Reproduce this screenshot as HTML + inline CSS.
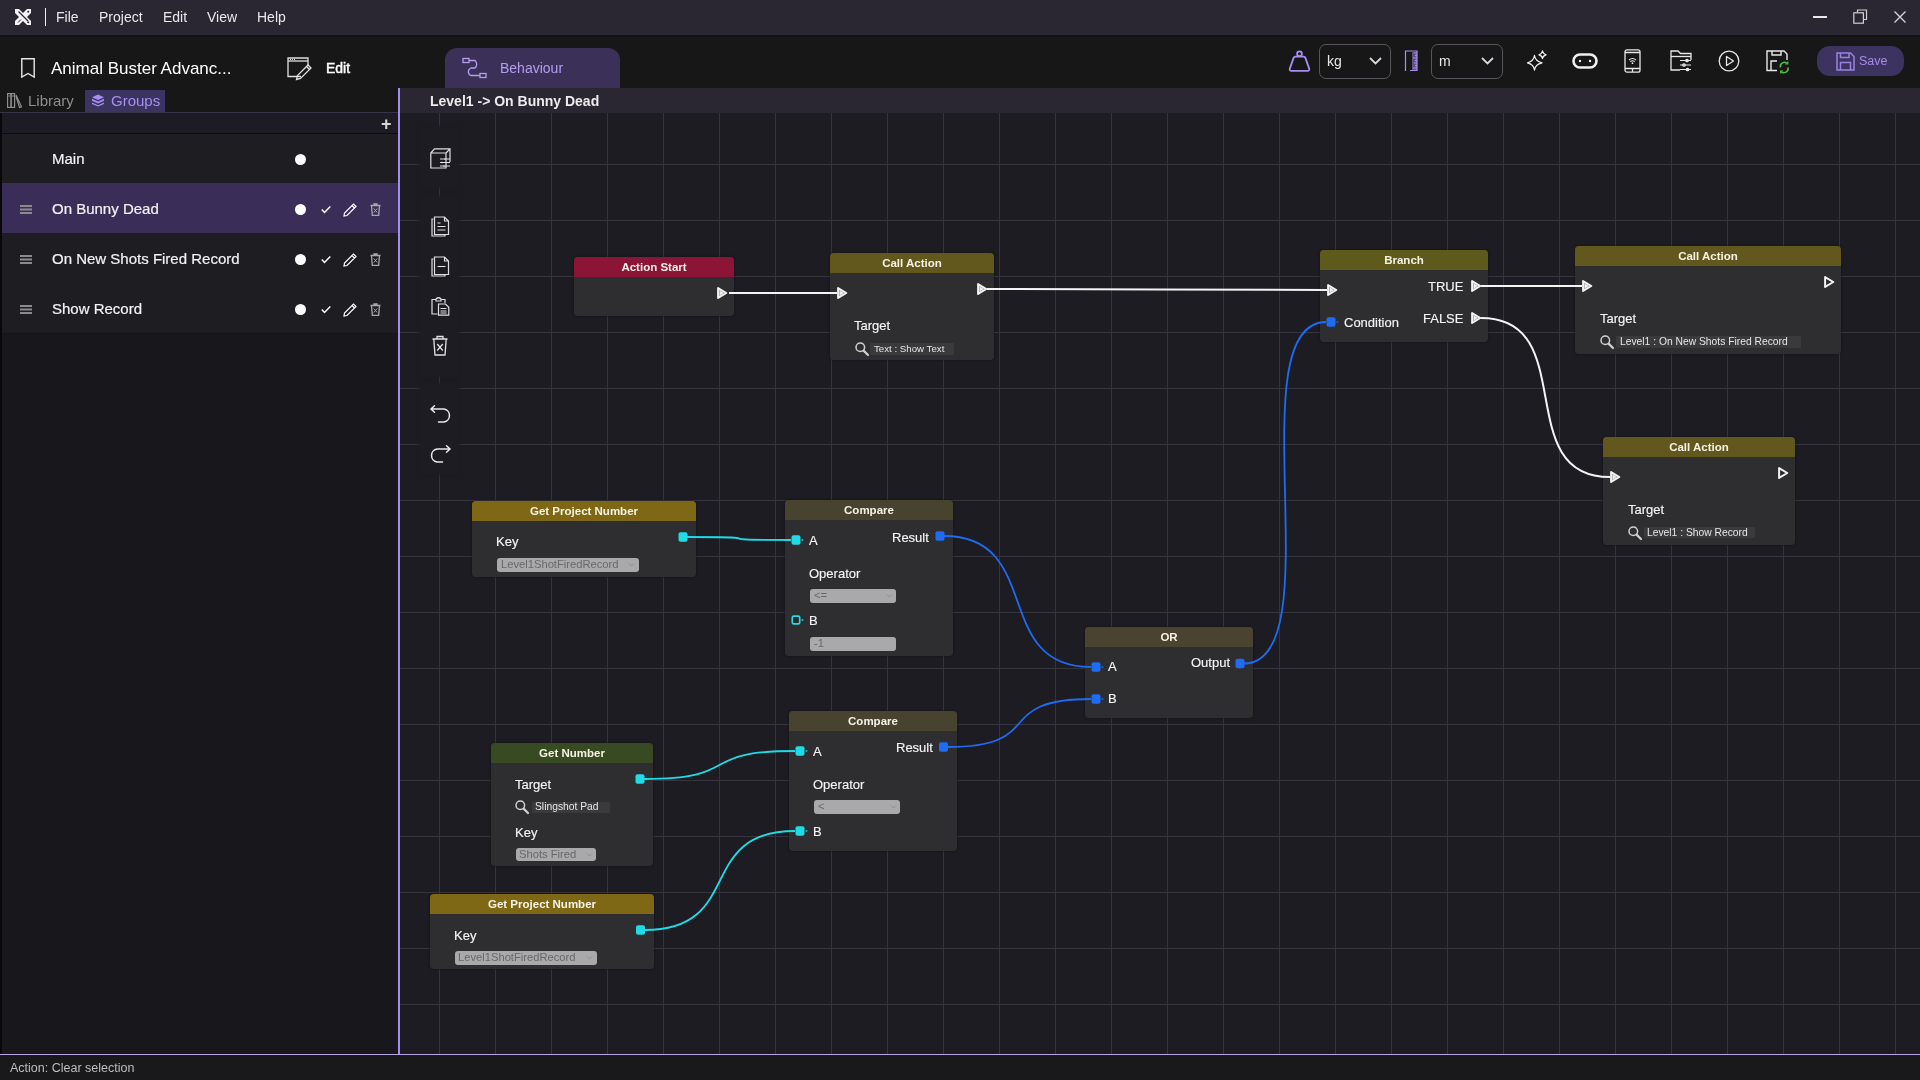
<!DOCTYPE html>
<html><head><meta charset="utf-8">
<style>
*{box-sizing:border-box;margin:0;padding:0}
html,body{width:1920px;height:1080px;overflow:hidden;background:#19181b;font-family:"Liberation Sans",sans-serif;color:#fff}
.a{position:absolute}
.t{position:absolute;line-height:1;white-space:nowrap;will-change:transform}
#titlebar{left:0;top:0;width:1920px;height:35px;background:#2a2733}
#tbborder{left:0;top:35px;width:1920px;height:2px;background:#131216}
#toolbar{left:0;top:37px;width:1920px;height:51px;background:#171717}
#sidebar{left:0;top:88px;width:398px;height:966px;background:#18171b}
#vline{left:398px;top:88px;width:2px;height:966px;background:#a48df2}
#canvas{left:400px;top:113px;width:1520px;height:941px;background-color:#1d1c23;
 background-image:linear-gradient(to right,transparent 39px,#36343c 39px,#36343c 40px,transparent 40px),
 linear-gradient(to bottom,transparent 51px,#36343c 51px,#36343c 52px,transparent 52px);
 background-size:56px 56px;}
#canvhead{left:400px;top:88px;width:1520px;height:25px;background:#2a2732}
#hline{left:0;top:1054px;width:1920px;height:1px;background:#b7a6e8}
#status{left:0;top:1055px;width:1920px;height:25px;background:#19191b}
.menu{font-size:14px;color:#e8e8ea}
svg{position:absolute;overflow:visible}
.nd{position:absolute;background:rgba(47,47,49,0.95);border-radius:4px;box-shadow:0 0 3px rgba(0,0,0,0.45)}
.nh{position:absolute;left:0;top:0;width:100%;height:20px;will-change:transform;border-radius:4px 4px 0 0;font-size:11.5px;font-weight:700;text-align:center;line-height:20px;color:#f6f1e4;white-space:nowrap}
.lb{position:absolute;line-height:1;white-space:nowrap;will-change:transform;font-size:13px;color:#f4f4f4;-webkit-text-stroke:0.15px #f4f4f4}
.sf{position:absolute;height:12px;background:#3a3a3d;border-radius:1px}
.st{position:absolute;line-height:1;white-space:nowrap;will-change:transform;font-size:10.3px;color:#e6e6e6}
.dd{position:absolute;background:#a9a9ab;border-radius:3px}
.dt{position:absolute;line-height:1;white-space:nowrap;will-change:transform;font-size:11.2px;color:#68686a}
.ic{position:absolute;background:#1d1c23;box-shadow:0 0 3px 2px #1d1c23}

</style></head><body>
<div class="a" id="titlebar"></div>
<div class="a" id="tbborder"></div>
<div class="a" id="toolbar"></div>
<div class="a" id="sidebar"></div>
<div class="a" id="canvas"></div>
<div class="a" id="canvhead"></div>
<div class="a" id="vline"></div>
<div class="a" id="hline"></div>
<div class="a" id="status"></div>

<!-- menu -->
<div class="t menu" style="left:56px;top:10px">File</div>
<div class="t menu" style="left:99px;top:10px">Project</div>
<div class="t menu" style="left:163px;top:10px">Edit</div>
<div class="t menu" style="left:207px;top:10px">View</div>
<div class="t menu" style="left:257px;top:10px">Help</div>

<!-- logo -->
<svg style="left:15px;top:9px" width="16" height="16" viewBox="0 0 16 16"><path d="M0 0 H4 L8 4 L12 0 H16 V4 L12 8 L16 12 V16 H12 L8 12 L4 16 H0 V12 L4 8 L0 4Z" fill="#f4f4f6"/><path d="M3.5 2.5 L13 12" stroke="#2a2734" stroke-width="1.3"/><circle cx="13.2" cy="2.8" r="1" fill="#2a2734"/><circle cx="13.2" cy="13.2" r="1" fill="#2a2734"/><path d="M3 13.5 L6 10.5" stroke="#2a2734" stroke-width="1"/></svg>
<div class="a" style="left:45px;top:8px;width:1px;height:18px;background:#f0f0f2"></div>
<!-- window controls -->
<div class="a" style="left:1813px;top:16px;width:14px;height:2px;background:#e8e8ea"></div>
<svg style="left:1853px;top:9px" width="15" height="15" viewBox="0 0 15 15" fill="none" stroke="#cfcfd2" stroke-width="1.2"><path d="M4.5 3.5 V1 H13.5 V10.5 H11"/><rect x="0.8" y="3.8" width="9.6" height="10.4"/></svg>
<svg style="left:1894px;top:11px" width="12" height="12" viewBox="0 0 12 12" stroke="#d8d8da" stroke-width="1.3"><path d="M0.5 0.5 L11.5 11.5 M11.5 0.5 L0.5 11.5"/></svg>

<!-- toolbar left -->
<svg style="left:21px;top:58px" width="14" height="20" viewBox="0 0 14 20" fill="none" stroke="#e8e8ea" stroke-width="1.4"><path d="M0.8 0.8 H13.2 V19 L7 15.5 L0.8 19Z"/></svg>
<div class="t" style="left:51px;top:59.5px;font-size:17px">Animal Buster Advanc...</div>
<svg style="left:287px;top:57px" width="26" height="24" viewBox="0 0 26 24" fill="none" stroke="#e0e0e2" stroke-width="1.3"><path d="M14 19.5 H1 V1 H21 V9"/><path d="M1 4 H21"/><path d="M3 2.5h1M5 2.5h1M7 2.5h1" stroke-width="1"/><path d="M9.5 22.5 L10.5 18.5 L21 8 L24 11 L13.5 21.5 Z M19.5 9.5 L22.5 12.5"/></svg>
<!-- behaviour tab -->
<div class="a" style="left:445px;top:48px;width:175px;height:40px;background:#3b3158;border-radius:12px 12px 0 0"></div>
<svg style="left:462px;top:57px" width="26" height="22" viewBox="0 0 26 22" fill="none" stroke="#b59cf0" stroke-width="1.3"><rect x="1" y="1.5" width="6" height="4"/><path d="M7 3.5 H13 A5 5 0 0 1 13 11 H9 A4 4 0 0 0 9 18.5 H18"/><rect x="18" y="16.5" width="6" height="4"/></svg>
<div class="t" style="left:500px;top:61px;font-size:14px;color:#b59cf0">Behaviour</div>

<!-- toolbar right -->
<svg style="left:1288px;top:50px" width="23" height="22" viewBox="0 0 23 22" fill="none" stroke="#a88ef2" stroke-width="1.8" stroke-linejoin="round"><circle cx="11.5" cy="3.8" r="2.4"/><path d="M7.2 6.6 H15.8 Q16.9 6.6 17.3 7.6 L21.2 18.6 Q21.7 20.8 19.6 20.8 H3.4 Q1.3 20.8 1.8 18.6 L5.7 7.6 Q6.1 6.6 7.2 6.6Z"/></svg>
<div class="a" style="left:1319px;top:44px;width:72px;height:35px;border:1px solid #58565c;border-radius:7px"></div>
<div class="t" style="left:1327px;top:54px;font-size:14px;color:#e8e8ea">kg</div>
<svg style="left:1369px;top:57px" width="13" height="8" viewBox="0 0 13 8" fill="none" stroke="#d8d8da" stroke-width="1.8"><path d="M1 1 L6.5 6.5 L12 1"/></svg>
<svg style="left:1404px;top:50px" width="15" height="22" viewBox="0 0 15 22" fill="none" stroke="#a88ef2" stroke-width="1.2"><path d="M1.5 21 V1 H13 V20.5 H6"/><path d="M13 3h-3M13 5.5h-2M13 8h-4M13 10.5h-2M13 13h-3M13 15.5h-2M13 18h-4" stroke-width="1"/><rect x="8" y="2" width="5" height="18.5" fill="#a88ef2" fill-opacity="0.5" stroke="none"/></svg>
<div class="a" style="left:1431px;top:44px;width:72px;height:35px;border:1px solid #58565c;border-radius:7px"></div>
<div class="t" style="left:1439px;top:54px;font-size:14px;color:#e8e8ea">m</div>
<svg style="left:1481px;top:57px" width="13" height="8" viewBox="0 0 13 8" fill="none" stroke="#d8d8da" stroke-width="1.8"><path d="M1 1 L6.5 6.5 L12 1"/></svg>

<svg style="left:1527px;top:50px" width="21" height="21" viewBox="0 0 21 21" fill="none" stroke="#f0f0f2" stroke-width="1.3" stroke-linejoin="round"><path d="M7.5 5.5 Q8.3 11.2 15 12.8 Q8.3 14.3 7.5 20 Q6.7 14.3 0.5 12.8 Q6.7 11.2 7.5 5.5Z"/><path d="M15.5 1 Q15.9 3.7 19 4.8 Q15.9 5.8 15.5 8.5 Q15.1 5.8 12 4.8 Q15.1 3.7 15.5 1Z"/></svg>
<svg style="left:1572px;top:53px" width="26" height="16" viewBox="0 0 26 16" fill="none" stroke="#f0f0f2" stroke-width="2.6"><rect x="1.5" y="1.5" width="23" height="13" rx="6.5"/><circle cx="8" cy="8" r="1.2" fill="#f0f0f2" stroke="none"/><circle cx="18" cy="8" r="1.2" fill="#f0f0f2" stroke="none"/></svg>
<svg style="left:1624px;top:49px" width="17" height="24" viewBox="0 0 17 24" fill="none" stroke="#e8e8ea" stroke-width="1.3"><rect x="1" y="0.8" width="15" height="22.4" rx="2"/><path d="M1 3.5 H16 M1 19.5 H16 M8.5 19.5 V23"/><path d="M5 11 Q8.5 8 12 11 M6.3 12.6 Q8.5 10.8 10.7 12.6" stroke-width="1.1"/><circle cx="8.5" cy="14.2" r="0.9" fill="#e8e8ea" stroke="none"/></svg>
<svg style="left:1670px;top:50px" width="23" height="21" viewBox="0 0 23 21" fill="none" stroke="#e8e8ea" stroke-width="1.3"><path d="M10 20 H1 V1 H8 L10.5 3.5 H21 V10"/><path d="M1 6.5 H21"/><path d="M10 10.5 H21 M10 15 H21 M10 19.5 H21" stroke-width="1.1"/><circle cx="17" cy="10.5" r="1.2"/><circle cx="14" cy="15" r="1.2"/><circle cx="17.5" cy="19.5" r="1.2"/></svg>
<svg style="left:1718px;top:50px" width="22" height="22" viewBox="0 0 22 22" fill="none" stroke="#e8e8ea" stroke-width="1.3"><circle cx="11" cy="11" r="9.8"/><path d="M8.5 6.5 L15.5 11 L8.5 15.5 Z" stroke-linejoin="round"/></svg>
<svg style="left:1766px;top:50px" width="24" height="23" viewBox="0 0 24 23" fill="none" stroke="#e8e8ea" stroke-width="1.4"><path d="M11 20.5 H1 V1 H18 L21 4 V10"/><path d="M6 1 V5 H15 V1"/><path d="M5 20.5 V11 H11"/><g stroke="#4cc04a" stroke-width="1.6"><path d="M14.5 17.5 A4.2 4.2 0 0 1 21.5 13.5"/><path d="M22 17.5 A4.2 4.2 0 0 1 15 21.5"/><path d="M21.8 11.5 V14 H19.3 M14.7 23.5 V21 H17.2" stroke-width="1.2"/></g></svg>

<div class="a" style="left:1817px;top:46px;width:87px;height:30px;background:#3d3360;border-radius:13px"></div>
<svg style="left:1836px;top:52px" width="19" height="19" viewBox="0 0 19 19" fill="none" stroke="#9a82e0" stroke-width="1.5"><path d="M1 1 H14.5 L18 4.5 V18 H1 Z"/><path d="M4.5 1 V5.5 H13 V1"/><path d="M4.5 18 V10.5 H14.5 V18"/></svg>
<div class="t" style="left:1859px;top:54.5px;font-size:12.5px;color:#a58ce8">Save</div>
<div class="t" style="left:325.5px;top:61px;font-size:14px;-webkit-text-stroke:0.45px #fff">Edit</div>

<!-- sidebar -->
<div class="a" style="left:0;top:88px;width:398px;height:24px;background:#171717"></div>
<div class="a" style="left:85px;top:90px;width:80px;height:22px;background:#3b3360"></div>
<div class="a" style="left:0;top:112px;width:398px;height:1px;background:#38334a"></div>
<div class="a" style="left:2px;top:113px;width:396px;height:20px;background:#1d1b23"></div>
<div class="a" style="left:0;top:133px;width:398px;height:1px;background:#0d0c10"></div>
<div class="a" style="left:0;top:113px;width:2px;height:941px;background:#08080a"></div>
<div class="a" style="left:2px;top:134px;width:396px;height:49px;background:#1e1d22"></div>
<div class="a" style="left:2px;top:183px;width:396px;height:50px;background:#3a2e58"></div>
<div class="a" style="left:2px;top:233px;width:396px;height:50px;background:#1e1d22"></div>
<div class="a" style="left:2px;top:283px;width:396px;height:50px;background:#1e1d22"></div>
<div class="a" style="left:2px;top:333px;width:396px;height:1px;background:#141318"></div>
<div class="t" style="left:27.5px;top:93.2px;font-size:15px;color:#8e8c90">Library</div>
<div class="t" style="left:110.5px;top:93.2px;font-size:15px;color:#a78ef0">Groups</div>
<svg style="left:7px;top:93px" width="16" height="15" viewBox="0 0 16 15" fill="none" stroke="#8e8c90" stroke-width="1.2"><rect x="0.6" y="0.6" width="3.5" height="13.8"/><rect x="4.1" y="0.6" width="3.5" height="13.8"/><path d="M9 2 L14.5 13.8 L12.5 14.4 L9 3"/><path d="M1.5 3h2M5 3h2"/></svg>
<svg style="left:91px;top:94px" width="14" height="13" viewBox="0 0 14 13"><path d="M7 0.5 L13 3.2 L7 6 L1 3.2Z" fill="#a78ef0"/><path d="M1 4.8 L7 7.6 L13 4.8 L13 6.8 L7 9.6 L1 6.8Z" fill="#a78ef0"/><path d="M1 8.4 L7 11.2 L13 8.4 L13 10 L7 12.6 L1 10Z" fill="#a78ef0"/></svg>
<div class="t" style="left:381px;top:115px;font-size:18px;font-weight:700;color:#d8d8da">+</div>

<div class="t" style="left:51.5px;top:150.8px;font-size:15px;color:#f2f2f4;-webkit-text-stroke:0.2px #f2f2f4">Main</div>
<div class="t" style="left:51.5px;top:200.8px;font-size:15px;color:#f2f2f4;-webkit-text-stroke:0.2px #f2f2f4">On Bunny Dead</div>
<div class="t" style="left:51.5px;top:250.8px;font-size:15px;color:#f2f2f4;-webkit-text-stroke:0.2px #f2f2f4">On New Shots Fired Record</div>
<div class="t" style="left:51.5px;top:300.8px;font-size:15px;color:#f2f2f4;-webkit-text-stroke:0.2px #f2f2f4">Show Record</div>

<div class="a" style="left:295px;top:154px;width:11px;height:11px;border-radius:50%;background:#fff"></div>
<div class="a" style="left:295px;top:204px;width:11px;height:11px;border-radius:50%;background:#fff"></div>
<div class="a" style="left:295px;top:254px;width:11px;height:11px;border-radius:50%;background:#fff"></div>
<div class="a" style="left:295px;top:304px;width:11px;height:11px;border-radius:50%;background:#fff"></div>

<!-- row icons -->
<svg style="left:20px;top:204px" width="12" height="11" viewBox="0 0 12 11"><g fill="#8b8a8e"><rect x="0" y="1" width="12" height="2"/><rect x="0" y="4.5" width="12" height="2"/><rect x="0" y="8" width="12" height="2"/></g></svg>
<svg style="left:20px;top:254px" width="12" height="11" viewBox="0 0 12 11"><g fill="#8b8a8e"><rect x="0" y="1" width="12" height="2"/><rect x="0" y="4.5" width="12" height="2"/><rect x="0" y="8" width="12" height="2"/></g></svg>
<svg style="left:20px;top:304px" width="12" height="11" viewBox="0 0 12 11"><g fill="#8b8a8e"><rect x="0" y="1" width="12" height="2"/><rect x="0" y="4.5" width="12" height="2"/><rect x="0" y="8" width="12" height="2"/></g></svg>

<svg style="left:321px;top:204px" width="10" height="10" viewBox="0 0 10 10" fill="none" stroke="#fff" stroke-width="1.5"><path d="M0.8 5.5 L3.5 8.5 L9.3 2.5"/></svg>
<svg style="left:321px;top:254px" width="10" height="10" viewBox="0 0 10 10" fill="none" stroke="#fff" stroke-width="1.5"><path d="M0.8 5.5 L3.5 8.5 L9.3 2.5"/></svg>
<svg style="left:321px;top:304px" width="10" height="10" viewBox="0 0 10 10" fill="none" stroke="#fff" stroke-width="1.5"><path d="M0.8 5.5 L3.5 8.5 L9.3 2.5"/></svg>

<svg style="left:343px;top:203px" width="14" height="14" viewBox="0 0 14 14" fill="none" stroke="#fff" stroke-width="1.2"><path d="M1 13 L1.5 10 L10.5 1 L13 3.5 L4 12.5 Z M9 2.5 L11.5 5"/></svg>
<svg style="left:343px;top:253px" width="14" height="14" viewBox="0 0 14 14" fill="none" stroke="#fff" stroke-width="1.2"><path d="M1 13 L1.5 10 L10.5 1 L13 3.5 L4 12.5 Z M9 2.5 L11.5 5"/></svg>
<svg style="left:343px;top:303px" width="14" height="14" viewBox="0 0 14 14" fill="none" stroke="#fff" stroke-width="1.2"><path d="M1 13 L1.5 10 L10.5 1 L13 3.5 L4 12.5 Z M9 2.5 L11.5 5"/></svg>

<svg style="left:370px;top:203px" width="11" height="13" viewBox="0 0 11 13" fill="none" stroke="#a8a8ac" stroke-width="1.3"><path d="M0.5 2.5h10M4 2.5V1h3v1.5"/><path d="M1.5 2.5 L2.3 12.3 H8.7 L9.5 2.5"/><path d="M3.8 5.5 L7.2 9.5 M7.2 5.5 L3.8 9.5" stroke-width="1"/></svg>
<svg style="left:370px;top:253px" width="11" height="13" viewBox="0 0 11 13" fill="none" stroke="#a8a8ac" stroke-width="1.3"><path d="M0.5 2.5h10M4 2.5V1h3v1.5"/><path d="M1.5 2.5 L2.3 12.3 H8.7 L9.5 2.5"/><path d="M3.8 5.5 L7.2 9.5 M7.2 5.5 L3.8 9.5" stroke-width="1"/></svg>
<svg style="left:370px;top:303px" width="11" height="13" viewBox="0 0 11 13" fill="none" stroke="#a8a8ac" stroke-width="1.3"><path d="M0.5 2.5h10M4 2.5V1h3v1.5"/><path d="M1.5 2.5 L2.3 12.3 H8.7 L9.5 2.5"/><path d="M3.8 5.5 L7.2 9.5 M7.2 5.5 L3.8 9.5" stroke-width="1"/></svg>

<div class="t" style="left:430px;top:94px;font-size:14px;font-weight:700;color:#ececee">Level1 -&gt; On Bunny Dead</div>
<div class="t" style="left:10px;top:1061.5px;font-size:12.5px;color:#bdbdc0">Action: Clear selection</div>

<!-- canvas toolbar -->
<div class="ic" style="left:421px;top:128px;width:36px;height:58px"></div>
<div class="ic" style="left:421px;top:198px;width:36px;height:177px"></div>
<div class="ic" style="left:421px;top:385px;width:36px;height:88px"></div>
<svg style="left:430px;top:148px" width="21" height="21" viewBox="0 0 21 21" fill="none" stroke="#e0e0e2" stroke-width="1.2"><path d="M0.8 5 L4.5 0.8 H20 V14 M0.8 5 H16 V20 H0.8 Z M16 5 L20 0.8"/><path d="M10 11h10M10 14.5h10M10 18h10" stroke-width="1"/><path d="M15 10.3v1.4M12 13.8v1.4M14 17.3v1.4" stroke-width="1.2"/></svg>
<svg style="left:431px;top:216px" width="19" height="21" viewBox="0 0 19 21" fill="none" stroke="#e0e0e2" stroke-width="1.2"><path d="M2.5 3 H1 V20 H14 V18.5"/><path d="M3.5 1 H13.5 L17.5 5 V18.5 H3.5 Z M13.5 1 V5 H17.5"/><path d="M6.5 7h3M6.5 10.5h8M6.5 14h8" stroke-width="1.1"/></svg>
<svg style="left:431px;top:256px" width="19" height="21" viewBox="0 0 19 21" fill="none" stroke="#e0e0e2" stroke-width="1.2"><path d="M2.5 3 H1 V20 H14 V18.5"/><path d="M3.5 1 H13.5 L17.5 5 V18.5 H3.5 Z M13.5 1 V5 H17.5"/><path d="M6.5 10.5h8" stroke-width="1.1"/></svg>
<svg style="left:431px;top:296px" width="19" height="20" viewBox="0 0 19 20" fill="none" stroke="#e0e0e2" stroke-width="1.2"><path d="M6.5 18 H1 V3.5 H5 M10 3.5 H14 V7"/><path d="M5 5 V3 Q7.5 0.5 10 3 V5 Z"/><path d="M7.5 8 H14.5 L17.8 11.3 V19.2 H7.5 Z"/><path d="M9.5 12.5h6M9.5 15h6M9.5 17h6" stroke-width="1"/></svg>
<svg style="left:432px;top:335px" width="16" height="21" viewBox="0 0 16 21" fill="none" stroke="#e0e0e2" stroke-width="1.3"><path d="M0.5 4 H15.5 M5 4 V1.5 H11 V4"/><path d="M1.8 4 L3 20 H13 L14.2 4"/><path d="M5.2 9 L10.8 15.5 M10.8 9 L5.2 15.5"/></svg>
<svg style="left:430px;top:405px" width="21" height="18" viewBox="0 0 21 18" fill="none" stroke="#e8e8ea" stroke-width="1.5" stroke-linecap="round"><path d="M4.5 0.8 L1 4 L4.5 7.2 M1 4 H14 A6.6 6.6 0 0 1 14 17 H8.5"/></svg>
<svg style="left:430px;top:445px" width="21" height="18" viewBox="0 0 21 18" fill="none" stroke="#e8e8ea" stroke-width="1.5" stroke-linecap="round"><path d="M16.5 0.8 L20 4 L16.5 7.2 M20 4 H7 A6.6 6.6 0 0 0 7 17 H12.5"/></svg>

<!-- nodes -->
<div class="nd" style="left:574px;top:257px;width:160px;height:59px"><div class="nh" style="background:#8c1537">Action Start</div></div>

<div class="nd" style="left:830px;top:253px;width:164px;height:107px"><div class="nh" style="background:#62581d">Call Action</div>
 <div class="lb" style="left:24px;top:66px">Target</div>
 <div class="sf" style="left:40px;top:90px;width:84px"></div>
 <div class="st" style="left:44px;top:91px;font-size:9.7px">Text : Show Text</div>
</div>

<div class="nd" style="left:1320px;top:250px;width:168px;height:92px"><div class="nh" style="background:#5e5a1c">Branch</div></div>
<div class="lb" style="left:1427.6px;top:279.7px">TRUE</div>
<div class="lb" style="left:1422.5px;top:311.8px">FALSE</div>
<div class="lb" style="left:1343.7px;top:315.5px">Condition</div>

<div class="nd" style="left:1575px;top:246px;width:266px;height:108px"><div class="nh" style="background:#62581d">Call Action</div>
 <div class="lb" style="left:25px;top:65.5px">Target</div>
 <div class="sf" style="left:40.5px;top:90px;width:185px;height:11.5px"></div>
 <div class="st" style="left:45px;top:90.5px">Level1 : On New Shots Fired Record</div>
</div>

<div class="nd" style="left:1603px;top:437px;width:192px;height:108px"><div class="nh" style="background:#62581d">Call Action</div>
 <div class="lb" style="left:25px;top:65.8px">Target</div>
 <div class="sf" style="left:40.7px;top:89.8px;width:111px;height:11.6px"></div>
 <div class="st" style="left:43.5px;top:90.5px">Level1 : Show Record</div>
</div>

<div class="nd" style="left:472px;top:501px;width:224px;height:76px"><div class="nh" style="background:#7e6815">Get Project Number</div>
 <div class="lb" style="left:24.3px;top:33.5px">Key</div>
 <div class="dd" style="left:25px;top:57px;width:142px;height:14px"></div>
 <div class="dt" style="left:28.6px;top:58px">Level1ShotFiredRecord</div>
</div>

<div class="nd" style="left:785px;top:500px;width:168px;height:156px"><div class="nh" style="background:#48432e">Compare</div>
 <div class="lb" style="left:24px;top:34px">A</div>
 <div class="lb" style="left:107px;top:30.7px">Result</div>
 <div class="lb" style="left:24px;top:66.5px">Operator</div>
 <div class="dd" style="left:25px;top:89px;width:86px;height:14px"></div>
 <div class="dt" style="left:29px;top:90px">&lt;=</div>
 <div class="lb" style="left:24px;top:114px">B</div>
 <div class="dd" style="left:25px;top:137px;width:86px;height:14px"></div>
 <div class="dt" style="left:29px;top:138px">-1</div>
</div>

<div class="nd" style="left:1085px;top:627px;width:168px;height:91px"><div class="nh" style="background:#49432f">OR</div>
 <div class="lb" style="left:23px;top:33.4px">A</div>
 <div class="lb" style="left:23px;top:65.4px">B</div>
 <div class="lb" style="left:105.7px;top:29.2px">Output</div>
</div>

<div class="nd" style="left:491px;top:743px;width:162px;height:123px"><div class="nh" style="background:#384a22">Get Number</div>
 <div class="lb" style="left:24px;top:34.5px">Target</div>
 <div class="sf" style="left:41px;top:58.5px;width:78px;height:11px"></div>
 <div class="st" style="left:43.7px;top:59px">Slingshot Pad</div>
 <div class="lb" style="left:24px;top:82.7px">Key</div>
 <div class="dd" style="left:25px;top:105.4px;width:80px;height:13.1px"></div>
 <div class="dt" style="left:28px;top:106px">Shots Fired</div>
</div>

<div class="nd" style="left:789px;top:711px;width:168px;height:140px"><div class="nh" style="background:#48432e">Compare</div>
 <div class="lb" style="left:24.3px;top:34px">A</div>
 <div class="lb" style="left:107px;top:30px">Result</div>
 <div class="lb" style="left:24px;top:66.5px">Operator</div>
 <div class="dd" style="left:25px;top:89px;width:86px;height:14px"></div>
 <div class="dt" style="left:29px;top:90px">&lt;</div>
 <div class="lb" style="left:24px;top:114px">B</div>
</div>

<div class="nd" style="left:430px;top:894px;width:224px;height:75px"><div class="nh" style="background:#7e6815">Get Project Number</div>
 <div class="lb" style="left:24px;top:34.7px">Key</div>
 <div class="dd" style="left:25px;top:57px;width:142px;height:13.7px"></div>
 <div class="dt" style="left:28.4px;top:58px">Level1ShotFiredRecord</div>
</div>

<!--OVERLAY--><svg style="left:0;top:0" width="1920" height="1080" viewBox="0 0 1920 1080"><path d="M729 293 C829 293 737 293 837 293" stroke="#f4f4f4" stroke-width="2.2" fill="none"/><path d="M987 289 C1087 289 1227 290 1327 290" stroke="#f4f4f4" stroke-width="2.0" fill="none"/><path d="M1481 286 C1581 286 1482 286 1582 286" stroke="#f4f4f4" stroke-width="2.0" fill="none"/><path d="M1481 318 C1581 318 1510 477 1610 477" stroke="#f4f4f4" stroke-width="2.0" fill="none"/><path d="M687 537 C787 537 691 540 791 540" stroke="#1fdbe6" stroke-width="1.8" fill="none"/><path d="M644 779 C744 779 695 751 795 751" stroke="#1fdbe6" stroke-width="1.8" fill="none"/><path d="M645 930 C745 930 695 831 795 831" stroke="#1fdbe6" stroke-width="1.8" fill="none"/><path d="M944 536 C1044 536 991 667 1091 667" stroke="#1d6cf2" stroke-width="1.8" fill="none"/><path d="M948 747 C1048 747 991 699 1091 699" stroke="#1d6cf2" stroke-width="1.8" fill="none"/><path d="M1244 663.5 C1334 663.5 1236 322 1326 322" stroke="#1d6cf2" stroke-width="1.8" fill="none"/><path d="M718.1 288.1 L726.3 293 L718.1 297.9 Z" fill="#8d8d90" stroke="#f2f2f2" stroke-width="2" stroke-linejoin="round"/><path d="M719.6 290.6 L723.7 293 L719.6 295.4 Z" fill="#f0f0f0"/><path d="M838.1 288.1 L846.3 293 L838.1 297.9 Z" fill="#8d8d90" stroke="#f2f2f2" stroke-width="2" stroke-linejoin="round"/><path d="M839.6 290.6 L843.7 293 L839.6 295.4 Z" fill="#f0f0f0"/><path d="M978.1 284.1 L986.3 289 L978.1 293.9 Z" fill="#8d8d90" stroke="#f2f2f2" stroke-width="2" stroke-linejoin="round"/><path d="M979.6 286.6 L983.7 289 L979.6 291.4 Z" fill="#f0f0f0"/><path d="M1328.1 285.1 L1336.3 290 L1328.1 294.9 Z" fill="#8d8d90" stroke="#f2f2f2" stroke-width="2" stroke-linejoin="round"/><path d="M1329.6 287.6 L1333.6999999999998 290 L1329.6 292.4 Z" fill="#f0f0f0"/><path d="M1472.1 281.1 L1480.3 286 L1472.1 290.9 Z" fill="#8d8d90" stroke="#f2f2f2" stroke-width="2" stroke-linejoin="round"/><path d="M1473.6 283.6 L1477.6999999999998 286 L1473.6 288.4 Z" fill="#f0f0f0"/><path d="M1472.1 313.1 L1480.3 318 L1472.1 322.9 Z" fill="#8d8d90" stroke="#f2f2f2" stroke-width="2" stroke-linejoin="round"/><path d="M1473.6 315.6 L1477.6999999999998 318 L1473.6 320.4 Z" fill="#f0f0f0"/><path d="M1583.1 281.1 L1591.3 286 L1583.1 290.9 Z" fill="#8d8d90" stroke="#f2f2f2" stroke-width="2" stroke-linejoin="round"/><path d="M1584.6 283.6 L1588.6999999999998 286 L1584.6 288.4 Z" fill="#f0f0f0"/><path d="M1825.1 277.1 L1833.3 282 L1825.1 286.9 Z" fill="#2a2a2d" stroke="#f2f2f2" stroke-width="2" stroke-linejoin="round"/><path d="M1611.1 472.1 L1619.3 477 L1611.1 481.9 Z" fill="#8d8d90" stroke="#f2f2f2" stroke-width="2" stroke-linejoin="round"/><path d="M1612.6 474.6 L1616.6999999999998 477 L1612.6 479.4 Z" fill="#f0f0f0"/><path d="M1779.1 468.1 L1787.3 473 L1779.1 477.9 Z" fill="#2a2a2d" stroke="#f2f2f2" stroke-width="2" stroke-linejoin="round"/><rect x="678.5" y="532.3" width="9" height="9.4" rx="2" fill="#1fdbe6"/><rect x="688.5" y="536.1" width="1.8" height="1.8" fill="#1fdbe6" opacity="0.8"/><rect x="791.5" y="535.3" width="9" height="9.4" rx="2" fill="#1fdbe6"/><rect x="801.5" y="539.1" width="1.8" height="1.8" fill="#1fdbe6" opacity="0.8"/><rect x="792.3" y="616.1" width="7.4" height="7.8" rx="1.5" fill="#2a2a2d" stroke="#1fdbe6" stroke-width="1.7"/><rect x="801.5" y="619.1" width="1.8" height="1.8" fill="#1fdbe6" opacity="0.8"/><rect x="935.5" y="531.3" width="9" height="9.4" rx="2" fill="#1d6cf2"/><rect x="945.5" y="535.1" width="1.8" height="1.8" fill="#1d6cf2" opacity="0.8"/><rect x="1091.5" y="662.3" width="9" height="9.4" rx="2" fill="#1d6cf2"/><rect x="1101.5" y="666.1" width="1.8" height="1.8" fill="#1d6cf2" opacity="0.8"/><rect x="1091.5" y="694.3" width="9" height="9.4" rx="2" fill="#1d6cf2"/><rect x="1101.5" y="698.1" width="1.8" height="1.8" fill="#1d6cf2" opacity="0.8"/><rect x="1235.5" y="658.8" width="9" height="9.4" rx="2" fill="#1d6cf2"/><rect x="1245.5" y="662.6" width="1.8" height="1.8" fill="#1d6cf2" opacity="0.8"/><rect x="1326.5" y="317.3" width="9" height="9.4" rx="2" fill="#1d6cf2"/><rect x="1336.5" y="321.1" width="1.8" height="1.8" fill="#1d6cf2" opacity="0.8"/><rect x="635.5" y="774.3" width="9" height="9.4" rx="2" fill="#1fdbe6"/><rect x="645.5" y="778.1" width="1.8" height="1.8" fill="#1fdbe6" opacity="0.8"/><rect x="795.5" y="746.3" width="9" height="9.4" rx="2" fill="#1fdbe6"/><rect x="805.5" y="750.1" width="1.8" height="1.8" fill="#1fdbe6" opacity="0.8"/><rect x="795.5" y="826.3" width="9" height="9.4" rx="2" fill="#1fdbe6"/><rect x="805.5" y="830.1" width="1.8" height="1.8" fill="#1fdbe6" opacity="0.8"/><rect x="939.0" y="742.3" width="9" height="9.4" rx="2" fill="#1d6cf2"/><rect x="949.0" y="746.1" width="1.8" height="1.8" fill="#1d6cf2" opacity="0.8"/><rect x="636.0" y="925.3" width="9" height="9.4" rx="2" fill="#1fdbe6"/><rect x="646.0" y="929.1" width="1.8" height="1.8" fill="#1fdbe6" opacity="0.8"/><g transform="translate(855 342)" fill="none" stroke="#cfcfd0"><circle cx="5.3" cy="5.3" r="4.3" stroke-width="1.5"/><path d="M8.6 8.6 L13 13" stroke-width="2.2" stroke-linecap="round"/></g><g transform="translate(1600 335)" fill="none" stroke="#cfcfd0"><circle cx="5.3" cy="5.3" r="4.3" stroke-width="1.5"/><path d="M8.6 8.6 L13 13" stroke-width="2.2" stroke-linecap="round"/></g><g transform="translate(1628 526)" fill="none" stroke="#cfcfd0"><circle cx="5.3" cy="5.3" r="4.3" stroke-width="1.5"/><path d="M8.6 8.6 L13 13" stroke-width="2.2" stroke-linecap="round"/></g><g transform="translate(515 800)" fill="none" stroke="#cfcfd0"><circle cx="5.3" cy="5.3" r="4.3" stroke-width="1.5"/><path d="M8.6 8.6 L13 13" stroke-width="2.2" stroke-linecap="round"/></g><path d="M629 563.5 L631.5 566.0 L634 563.5" stroke="#8f8f91" stroke-width="1" fill="none"/><path d="M887 594.5 L889.5 597.0 L892 594.5" stroke="#8f8f91" stroke-width="1" fill="none"/><path d="M587 853.5 L589.5 856.0 L592 853.5" stroke="#8f8f91" stroke-width="1" fill="none"/><path d="M891 805.5 L893.5 808.0 L896 805.5" stroke="#8f8f91" stroke-width="1" fill="none"/><path d="M587 956.5 L589.5 959.0 L592 956.5" stroke="#8f8f91" stroke-width="1" fill="none"/></svg><!--/OVERLAY-->
</body></html>
